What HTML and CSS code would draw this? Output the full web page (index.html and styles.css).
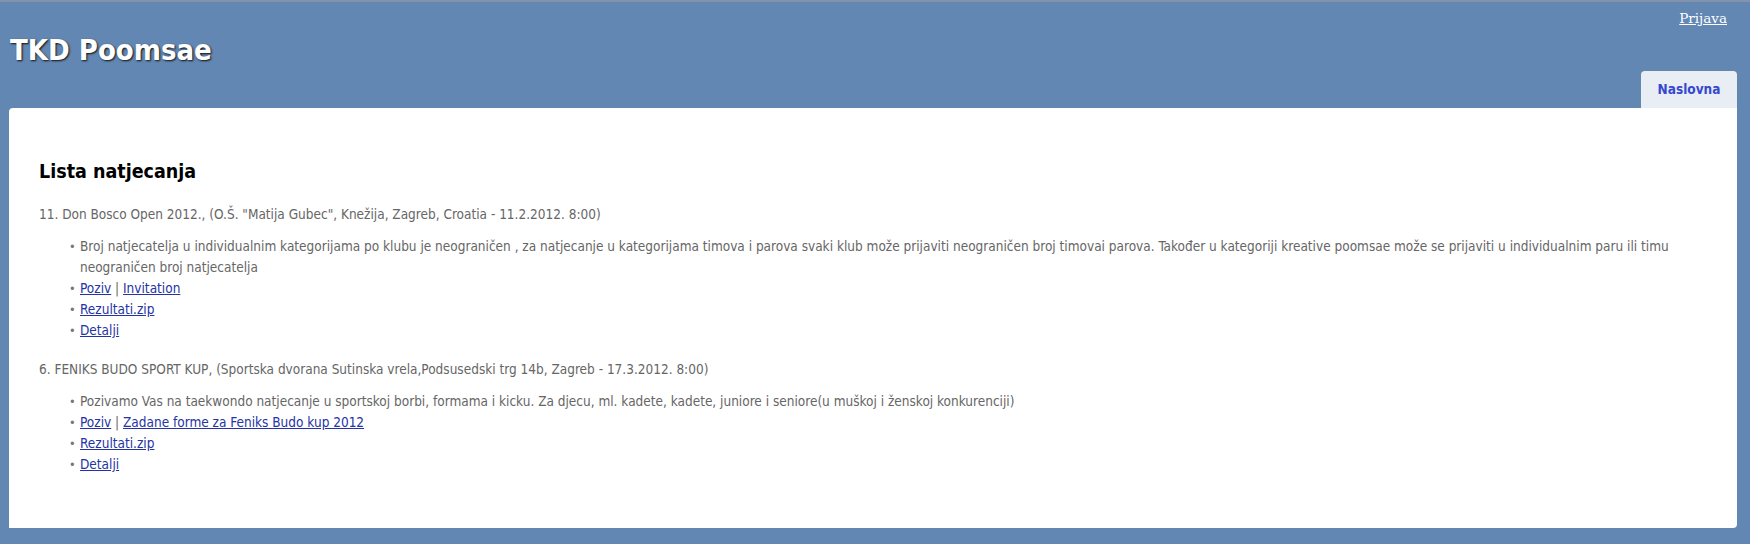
FILE: index.html
```html
<!DOCTYPE html>
<html lang="hr">
<head>
<meta charset="utf-8">
<title>TKD Poomsae</title>
<link rel="stylesheet" href="styles.css">
</head>
<body>
<div class="page">
  <header class="header">
    <h1 class="title">TKD Poomsae</h1>
    <div class="header-right">
      <a class="login" href="#">Prijava</a>
      <nav class="menu"><a class="tab" href="#">Naslovna</a></nav>
    </div>
  </header>
  <main class="main">
    <h2 class="heading">Lista natjecanja</h2>
    <div class="comp">
      <p class="comp-title">11. Don Bosco Open 2012., (O.Š. "Matija Gubec", Knežija, Zagreb, Croatia - 11.2.2012. 8:00)</p>
      <ul class="comp-list">
        <li>Broj natjecatelja u individualnim kategorijama po klubu je neograničen , za natjecanje u kategorijama timova i parova svaki klub može prijaviti neograničen broj timovai parova. Također u kategoriji kreative poomsae može se prijaviti u individualnim paru ili timu neograničen broj natjecatelja</li>
        <li><a href="#">Poziv</a> | <a href="#">Invitation</a></li>
        <li><a href="#">Rezultati.zip</a></li>
        <li><a href="#">Detalji</a></li>
      </ul>
    </div>
    <div class="comp">
      <p class="comp-title">6. FENIKS BUDO SPORT KUP, (Sportska dvorana Sutinska vrela,Podsusedski trg 14b, Zagreb - 17.3.2012. 8:00)</p>
      <ul class="comp-list">
        <li>Pozivamo Vas na taekwondo natjecanje u sportskoj borbi, formama i kicku. Za djecu, ml. kadete, kadete, juniore i seniore(u muškoj i ženskoj konkurenciji)</li>
        <li><a href="#">Poziv</a> | <a href="#">Zadane forme za Feniks Budo kup 2012</a></li>
        <li><a href="#">Rezultati.zip</a></li>
        <li><a href="#">Detalji</a></li>
      </ul>
    </div>
  </main>
</div>
</body>
</html>
```

FILE: styles.css
```css
html, body {
  margin: 0;
  padding: 0;
}
body {
  background: #6287b3;
  font-family: "DejaVu Sans Condensed", "Liberation Sans", sans-serif;
  font-size: 13.5px;
  color: #666;
  border-top: 2px solid #8393ac;
}
.page {
  padding: 0 13px 0 9px;
}
.header {
  display: flex;
  justify-content: space-between;
  align-items: stretch;
  height: 106px;
}
.title {
  margin: 28px 0 0 1px;
  font-family: "DejaVu Sans Condensed", "Liberation Sans", sans-serif;
  font-size: 29px;
  font-weight: bold;
  color: #fff;
  text-shadow: 1px 1px 2px #111;
  line-height: 40px;
}
.header-right {
  display: flex;
  flex-direction: column;
  align-items: flex-end;
  justify-content: space-between;
}
.login {
  margin: 8px 10px 0 0;
  font-family: "DejaVu Serif", serif;
  font-size: 13.5px;
  color: #fff;
  text-decoration: underline;
}
.menu {
  display: flex;
}
.tab {
  display: block;
  width: 96px;
  height: 37px;
  line-height: 37px;
  text-align: center;
  background: #e8eef4;
  color: #3647d0;
  font-weight: bold;
  font-size: 13.5px;
  text-decoration: none;
  border-radius: 4px 4px 0 0;
}
.main {
  background: #fff;
  border-radius: 4px 0 4px 0;
  padding: 30px 30px 33px 30px;
  min-height: 357px;
}
.heading {
  margin: 22px 0 21px;
  font-size: 19.5px;
  font-weight: bold;
  color: #000;
}
.comp-title {
  margin: 0;
  line-height: 21px;
}
.comp-list {
  margin: 11px 0 18px;
  padding-left: 41px;
  line-height: 21px;
  list-style: none;
}
.comp-list li::before {
  content: "•";
  display: inline-block;
  vertical-align: top;
  width: 11px;
  margin-left: -11px;
  font-size: 12.5px;
  line-height: 21px;
  color: #777;
}
.comp-list a {
  color: #2433a5;
}
```
